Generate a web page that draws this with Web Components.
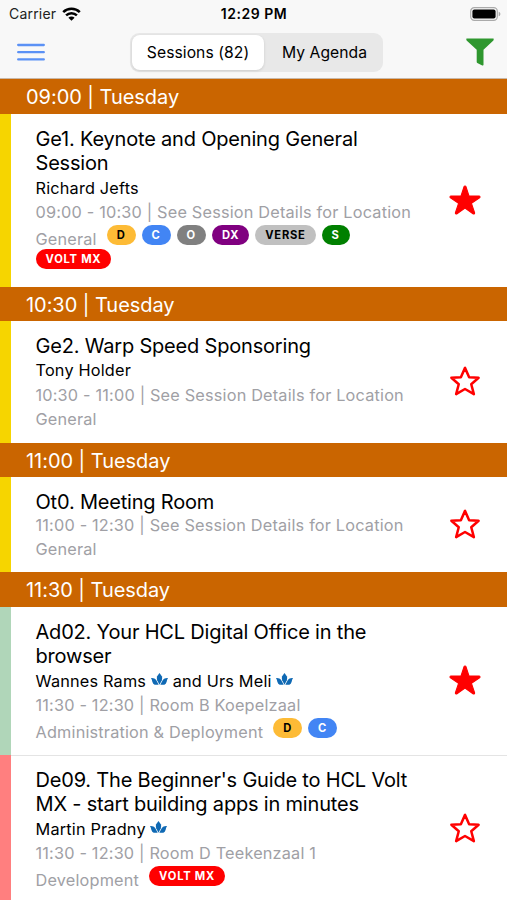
<!DOCTYPE html>
<html lang="en">
<head>
<meta charset="utf-8">
<meta name="viewport" content="width=device-width, initial-scale=1">
<title>Sessions</title>
<style>
  body {
    margin: 0;
    height: 900px;
    overflow: hidden;
    background: #fff;
    color: #000;
    font-family: Inter, "Liberation Sans", sans-serif;
  }
</style>
</head>
<body>
<agenda-app>
  <status-bar slot="header"></status-bar>
  <agenda-toolbar slot="header"></agenda-toolbar>

  <time-divider style="--height: 35px">09:00 | Tuesday</time-divider>
  <session-item color="#f6d500" style="--height: 173px" starred>
    Ge1. Keynote and Opening General Session
    <span slot="speaker">Richard Jefts</span>
    <span slot="meta">09:00 - 10:30 | See Session Details for Location</span>
    <span slot="track">General</span>
    <tag-pill slot="tags" kind="d">D</tag-pill>
    <tag-pill slot="tags" kind="c">C</tag-pill>
    <tag-pill slot="tags" kind="o">O</tag-pill>
    <tag-pill slot="tags" kind="dx">DX</tag-pill>
    <tag-pill slot="tags" kind="verse">VERSE</tag-pill>
    <tag-pill slot="tags" kind="s">S</tag-pill>
    <tag-pill slot="tags" kind="volt">VOLT MX</tag-pill>
  </session-item>

  <time-divider>10:30 | Tuesday</time-divider>
  <session-item color="#f6d500" style="--height: 122px">
    Ge2. Warp Speed Sponsoring
    <span slot="speaker">Tony Holder</span>
    <span slot="meta">10:30 - 11:00 | See Session Details for Location</span>
    <span slot="track">General</span>
  </session-item>

  <time-divider>11:00 | Tuesday</time-divider>
  <session-item color="#f6d500" style="--height: 95px; --meta-shift: -1.5px">
    Ot0. Meeting Room
    <span slot="meta">11:00 - 12:30 | See Session Details for Location</span>
    <span slot="track">General</span>
  </session-item>

  <time-divider style="--height: 35px">11:30 | Tuesday</time-divider>
  <session-item color="#b0d6b9" style="--height: 148px" starred>
    Ad02. Your HCL Digital Office in the browser
    <span slot="speaker">Wannes Rams <lotus-icon></lotus-icon> and Urs Meli <lotus-icon></lotus-icon></span>
    <span slot="meta">11:30 - 12:30 | Room B Koepelzaal</span>
    <span slot="track">Administration &amp; Deployment</span>
    <tag-pill slot="tags" kind="d">D</tag-pill>
    <tag-pill slot="tags" kind="c">C</tag-pill>
  </session-item>
  <session-item color="#ff7f7f" style="--height: 148px" lined>
    De09. The Beginner's Guide to HCL Volt MX - start building apps in minutes
    <span slot="speaker">Martin Pradny <lotus-icon></lotus-icon></span>
    <span slot="meta">11:30 - 12:30 | Room D Teekenzaal 1</span>
    <span slot="track">Development</span>
    <tag-pill slot="tags" kind="volt">VOLT MX</tag-pill>
  </session-item>
</agenda-app>

<script>
class AgendaApp extends HTMLElement {
  connectedCallback() {
    this.attachShadow({ mode: 'open' });
    this.shadowRoot.innerHTML = `
      <style>
        :host { display: flex; flex-direction: column; height: 900px; overflow: hidden; }
        header {
          flex: none;
          height: 79px;
          box-sizing: border-box;
          background: #f8f8f8;
          border-bottom: 1px solid #c9b8a8;
        }
        main { display: flex; flex-direction: column; }
      </style>
      <header><slot name="header"></slot></header>
      <main><slot></slot></main>
    `;
  }
}

class StatusBar extends HTMLElement {
  connectedCallback() {
    this.attachShadow({ mode: 'open' });
    this.shadowRoot.innerHTML = `
      <style>
        :host {
          display: grid;
          grid-template-columns: 1fr auto 1fr;
          align-items: center;
          height: 27px;
          padding: 0 6px 0 9px;
          font-size: 14px;
        }
        .carrier { display: flex; align-items: center; gap: 6px; color: #222; letter-spacing: 0.2px; }
        .clock { font-weight: 600; letter-spacing: 0.5px; margin-right: 2px; }
        .battery { justify-self: end; }
        svg { display: block; }
      </style>
      <div class="carrier">
        <span>Carrier</span>
        <svg width="19" height="14" viewBox="0 0 19 14" fill="none" stroke="#000" stroke-width="2.5">
          <path d="M1.2 5.2a11.8 11.8 0 0 1 16.6 0"/>
          <path d="M4.1 8.4a7.7 7.7 0 0 1 10.8 0"/>
          <path d="M6.4 10.8a4.4 4.4 0 0 1 6.2 0L9.5 13.8z" fill="#000" stroke="none"/>
        </svg>
      </div>
      <div class="clock">12:29 PM</div>
      <svg class="battery" width="31" height="14" viewBox="0 0 31 14">
        <rect x=".7" y=".7" width="26.6" height="12.6" rx="3.6" fill="#f8f8f8" stroke="#aaa" stroke-width="1.2"/>
        <rect x="2.4" y="2.4" width="23.2" height="9.2" rx="2" fill="#000"/>
        <path d="M28.7 4.7v4.6c1-.4 1.7-1.2 1.7-2.3s-.7-1.9-1.7-2.3z" fill="#aaa"/>
      </svg>
    `;
  }
}

class AgendaToolbar extends HTMLElement {
  connectedCallback() {
    this.attachShadow({ mode: 'open' });
    this.shadowRoot.innerHTML = `
      <style>
        :host {
          display: grid;
          grid-template-columns: 1fr auto 1fr;
          align-items: center;
          height: 50px;
          padding: 0 13px 0 17px;
        }
        .segment {
          display: flex;
          box-sizing: border-box;
          width: 253px;
          height: 39px;
          padding: 2px;
          margin-left: 2px;
          border-radius: 9px;
          background: #e8e8e8;
          font-size: 15.7px;
          letter-spacing: 0.05px;
        }
        .segment span {
          flex: 1;
          display: flex;
          align-items: center;
          justify-content: center;
          padding-left: 4px;
        }
        .segment .active {
          flex: none;
          box-sizing: border-box;
          width: 132px;
          padding-left: 0;
          border-radius: 8px;
          background: #fff;
          box-shadow: 0 1px 3px rgba(0, 0, 0, .12);
        }
        .filter { justify-self: end; }
        svg { display: block; }
      </style>
      <svg width="28" height="18" viewBox="0 0 28 18" stroke="#5b91f5" stroke-width="2.3" stroke-linecap="round">
        <path d="M1.2 2H26.8M1.2 9.2H26.8M1.2 16.4H26.8"/>
      </svg>
      <div class="segment"><span class="active">Sessions (82)</span><span>My Agenda</span></div>
      <svg class="filter" width="28" height="28" viewBox="0 0 28 28" fill="#2f972f">
        <path d="M.8.6H27.2Q28 .6 27.7 1.5L27.4 2.5 17.5 11.7V26.8Q17.4 27.9 16.3 27.4L11.3 25Q10.7 24.7 10.7 24V11.7L.6 2.5.3 1.5Q0 .6.8.6z"/>
      </svg>
    `;
  }
}

class TimeDivider extends HTMLElement {
  connectedCallback() {
    this.attachShadow({ mode: 'open' });
    this.shadowRoot.innerHTML = `
      <style>
        :host {
          flex: none;
          display: flex;
          align-items: center;
          box-sizing: border-box;
          height: var(--height, 34px);
          padding: 1px 0 0 26px;
          background: #ca6500;
          color: #fff;
          font-size: 20px;
          letter-spacing: -0.05px;
        }
      </style>
      <slot></slot>
    `;
  }
}

class SessionItem extends HTMLElement {
  connectedCallback() {
    const star = this.hasAttribute('starred')
      ? '<path d="M394 480a16 16 0 0 1-9.39-3L256 383.76 127.39 477a16 16 0 0 1-24.55-18.08L153 310.35 23 221.2a16 16 0 0 1 9-29.2h160.38l48.4-148.95a16 16 0 0 1 30.44 0l48.4 149H480a16 16 0 0 1 9.05 29.2L359 310.35l50.13 148.53A16 16 0 0 1 394 480z" fill="red" stroke="red" stroke-width="18" stroke-linejoin="round"/>'
      : '<path d="M474 204L322 196 256 46l-66 150L38 204l118 104-42 158 142-82 142 82-42-158z" fill="none" stroke="red" stroke-width="40" stroke-linejoin="round"/>';
    this.attachShadow({ mode: 'open' });
    this.shadowRoot.innerHTML = `
      <style>
        :host {
          flex: none;
          display: flex;
          box-sizing: border-box;
          height: var(--height);
          border-left: 11px solid ${this.getAttribute('color')};
          background: #fff;
        }
        :host([lined]) { box-shadow: inset 0 1px #e4e4e4; }
        .body {
          width: 380px;
          padding: 12.5px 0 0 24.5px;
          font-size: 16.3px;
          line-height: 24.5px;
          letter-spacing: 0.18px;
        }
        .title { font-size: 20px; letter-spacing: -0.19px; }
        .meta, .track { color: #a0a0a5; }
        .speaker, .meta { display: block; }
        .meta { margin-top: var(--meta-shift, 0); }
        .tags { display: flex; flex-wrap: wrap; column-gap: 6px; }
        .track { margin-right: 4px; }
        :host([tagged]) .track { padding-top: 2px; margin-bottom: -2px; }
        .star { margin: auto 26px auto auto; padding-bottom: 2px; display: block; }
      </style>
      <div class="body">
        <div class="title"><slot></slot></div>
        <slot name="speaker" class="speaker"></slot>
        <slot name="meta" class="meta"></slot>
        <div class="tags"><span class="track"><slot name="track"></slot></span><slot name="tags"></slot></div>
      </div>
      <svg class="star" width="32" height="32" viewBox="0 0 512 512">${star}</svg>
    `;
    this.toggleAttribute('tagged', !!this.querySelector('tag-pill'));
  }
}

const TAG_COLORS = {
  d: ['#fdbb36', '#000'],
  c: ['#4285f4', '#fff'],
  o: ['#808080', '#fff'],
  dx: ['#800080', '#fff'],
  verse: ['#c0c0c0', '#000'],
  s: ['#008000', '#fff'],
  volt: ['#ff0000', '#fff'],
};

class TagPill extends HTMLElement {
  connectedCallback() {
    const [background, color] = TAG_COLORS[this.getAttribute('kind')];
    this.attachShadow({ mode: 'open' });
    this.shadowRoot.innerHTML = `
      <style>
        :host {
          display: block;
          box-sizing: border-box;
          height: 20px;
          margin: 0.4px 0 4.1px;
          padding: 0 10px;
          border-radius: 10px;
          background: ${background};
          color: ${color};
          font-size: 11.2px;
          font-weight: 700;
          line-height: 20px;
          letter-spacing: 0.75px;
        }
      </style>
      <slot></slot>
    `;
  }
}

class LotusIcon extends HTMLElement {
  connectedCallback() {
    this.attachShadow({ mode: 'open' });
    this.shadowRoot.innerHTML = `
      <style>
        :host { display: inline-block; width: 17px; height: 12px; vertical-align: 2px; }
        svg { display: block; }
      </style>
      <svg width="17" height="12" viewBox="0 0 51 36" fill="#0f69b4">
        <path d="M25.500 0l7 10q2.500 6 0 12l-7 13-7-13q-2.500-6 0-12z"/>
        <path d="M0 15q11-1 15 5 4 7 8 15H11Q6 33 4 26 3 20 0 15z"/>
        <path d="M51 15q-11-1-15 5-4 7-8 15h12q5-2 7-9 1-6 4-11z"/>
      </svg>
    `;
  }
}

customElements.define('agenda-app', AgendaApp);
customElements.define('status-bar', StatusBar);
customElements.define('agenda-toolbar', AgendaToolbar);
customElements.define('time-divider', TimeDivider);
customElements.define('session-item', SessionItem);
customElements.define('tag-pill', TagPill);
customElements.define('lotus-icon', LotusIcon);
</script>
</body>
</html>
